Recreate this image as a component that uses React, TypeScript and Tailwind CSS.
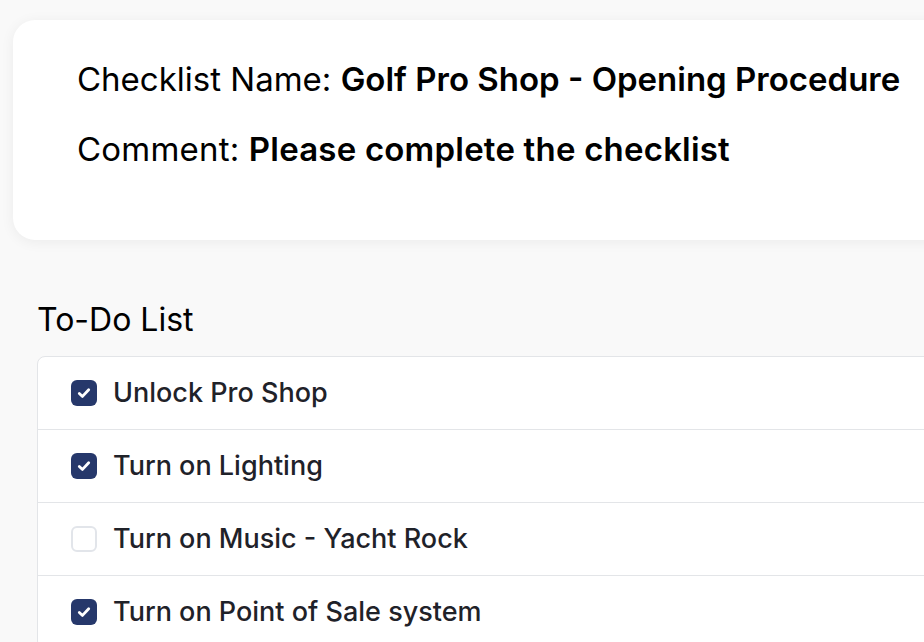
import React from "react";

const items = [
  { label: "Unlock Pro Shop", done: true },
  { label: "Turn on Lighting", done: true },
  { label: "Turn on Music - Yacht Rock", done: false },
  { label: "Turn on Point of Sale system", done: true },
];

function Box({ done }: { done: boolean }) {
  if (!done)
    return (
      <div className="w-[26px] h-[26px] rounded-[6px] border-2 border-[#e2e5ea] bg-white shrink-0" />
    );
  return (
    <div className="w-[26px] h-[26px] rounded-[6px] bg-[#26386b] flex items-center justify-center shrink-0">
      <svg width="14" height="14" viewBox="0 0 14 14" fill="none">
        <path d="M2.3 7.4 L5.5 10.4 L11.7 3.8" stroke="white" strokeWidth="2.8" strokeLinecap="round" strokeLinejoin="round" />
      </svg>
    </div>
  );
}

export default function App() {
  return (
    <div
      className="h-screen w-full overflow-hidden bg-[#f9f9f9] pt-[20px] pl-[13px]"
      style={{ fontFamily: "Inter, 'Noto Sans', sans-serif" }}
    >
      <div className="w-[1000px] h-[220px] bg-white rounded-[22px] shadow-[0_2px_14px_rgba(0,0,0,0.06)] pl-[64px] pt-[39px] flex flex-col gap-[30px]">
        <div className="text-[33px] leading-[40px] text-black whitespace-nowrap">
          Checklist Name: <span className="font-semibold">Golf Pro Shop - Opening Procedure</span>
        </div>
        <div className="text-[33px] leading-[40px] text-black whitespace-nowrap tracking-[0.2px]">
          Comment: <span className="font-semibold">Please complete the checklist</span>
        </div>
      </div>
      <div className="pl-[24px] pt-[60px]">
        <div className="text-[32px] leading-[40px] text-black">To-Do List</div>
        <div className="mt-[16px] w-[1000px] bg-white border border-[#e3e5e8] rounded-[8px]">
          {items.map((it, i) => (
            <div
              key={i}
              className={`flex items-center pl-[33px] gap-[16px] ${i > 0 ? "h-[73px] border-t border-[#e3e5e8]" : "h-[72px]"}`}
            >
              <Box done={it.done} />
              <span className="text-[27px] font-medium text-[#1f2229] whitespace-nowrap">{it.label}</span>
            </div>
          ))}
        </div>
      </div>
    </div>
  );
}
